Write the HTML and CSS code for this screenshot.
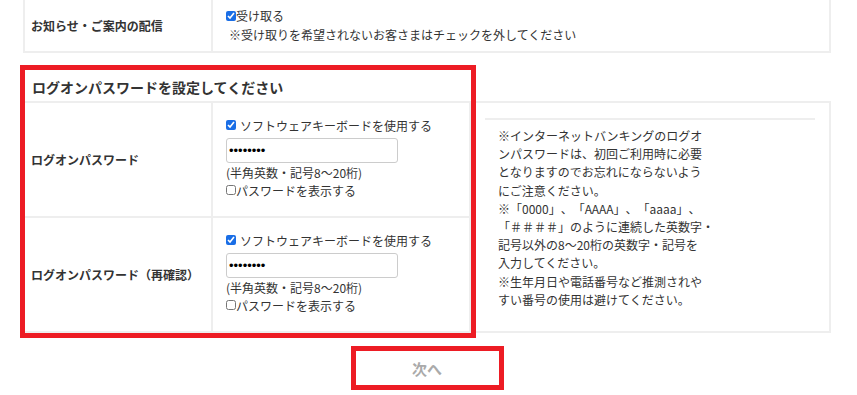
FILE: index.html
```html
<!DOCTYPE html>
<html lang="ja">
<head>
<meta charset="utf-8">
<title>ログオンパスワード設定</title>
<link rel="stylesheet" href="styles.css">
</head>
<body>
<div class="page">
  <table class="form-table top-table">
    <colgroup><col class="c1"><col class="c2w"></colgroup>
    <tr>
      <th>お知らせ・ご案内の配信</th>
      <td class="top-cell">
        <label class="line"><input type="checkbox" class="cb" checked>受け取る</label>
        <div class="line indent">※受け取りを希望されないお客さまはチェックを外してください</div>
      </td>
    </tr>
  </table>

  <section class="pw-section">
    <h2 class="section-title">ログオンパスワードを設定してください</h2>
    <table class="form-table pw-table">
      <colgroup><col class="c1"><col class="c2"><col class="c3"></colgroup>
      <tr>
        <th>ログオンパスワード</th>
        <td class="field">
          <label class="line"><input type="checkbox" class="cb gap" checked>ソフトウェアキーボードを使用する</label>
          <input type="password" class="pw" value="12345678">
          <div class="line">(半角英数・記号8～20桁)</div>
          <label class="line"><input type="checkbox" class="cb">パスワードを表示する</label>
        </td>
        <td class="note" rowspan="2">
          <div class="note-rule"></div>
          <p class="note-text">※インターネットバンキングのログオ<br>ンパスワードは、初回ご利用時に必要<br>となりますのでお忘れにならないよう<br>にご注意ください。<br>※「0000」、「AAAA」、「aaaa」、<br>「＃＃＃＃」のように連続した英数字・<br>記号以外の8～20桁の英数字・記号を<br>入力してください。<br>※生年月日や電話番号など推測されや<br>すい番号の使用は避けてください。</p>
        </td>
      </tr>
      <tr>
        <th>ログオンパスワード（再確認）</th>
        <td class="field">
          <label class="line"><input type="checkbox" class="cb gap" checked>ソフトウェアキーボードを使用する</label>
          <input type="password" class="pw" value="12345678">
          <div class="line">(半角英数・記号8～20桁)</div>
          <label class="line"><input type="checkbox" class="cb">パスワードを表示する</label>
        </td>
      </tr>
    </table>
    <div class="highlight"></div>
  </section>

  <div class="actions">
    <div class="btn-mark"><button class="next-btn" disabled>次へ</button></div>
  </div>
</div>
</body>
</html>
```

FILE: styles.css
```css
* { box-sizing: border-box; }

body {
  margin: 0;
  background: #fff;
  color: #333;
  font-family: "Noto Sans CJK JP", "Noto Sans", sans-serif;
  font-size: 12px;
  text-spacing-trim: space-all;
}

.page {
  width: 808px;
  margin-left: 23px;
}

.form-table {
  width: 100%;
  table-layout: fixed;
  border-collapse: separate;
  border-spacing: 0;
  border-left: 2px solid #eee;
}

.form-table th,
.form-table td {
  border-right: 2px solid #eee;
  border-bottom: 2px solid #eee;
}

.c1 { width: 188px; }
.c2 { width: 258px; }
.c3 { width: 360px; }

.form-table th {
  text-align: left;
  vertical-align: middle;
  font-weight: bold;
  padding: 0 6px;
  color: #333;
}

.top-cell {
  padding: 6px 13px 7px;
  line-height: 19px;
}

.line {
  display: flex;
  align-items: center;
  height: 18px;
  white-space: nowrap;
}

.top-cell .line { height: 19px; }

.indent { padding-left: 3px; }

.cb {
  width: 10px;
  height: 10px;
  margin: 0;
  flex: none;
  accent-color: #1a6ee6;
}

.cb.gap { margin-right: 4px; }

.pw-section {
  position: relative;
  padding-top: 24px;
}

.section-title {
  margin: 0 0 4px;
  padding-left: 9px;
  font-size: 14px;
  line-height: 20px;
  font-weight: bold;
}

.pw-table { border-top: 2px solid #eee; }

.field {
  padding: 13px 13px 17px;
  vertical-align: middle;
}

.pw {
  display: block;
  width: 172px;
  height: 25px;
  margin: 4px 0 0;
  padding: 0 2px;
  border: 1px solid #ccc;
  border-radius: 3px;
  font-family: "Liberation Sans", sans-serif;
  font-size: 13px;
  color: #000;
  background: #fff;
}

.note {
  vertical-align: top;
  padding: 15px 14px 0;
}

.note-rule {
  border-top: 2px solid #eee;
}

.note-text {
  margin: 7px 0 0;
  padding-left: 13px;
  width: 260px;
  line-height: 18.2px;
  white-space: nowrap;
}

.highlight {
  position: absolute;
  left: -3px;
  top: 12px;
  width: 456px;
  height: 273px;
  border: 5px solid #ed1c24;
  pointer-events: none;
}

.actions {
  text-align: center;
  padding-top: 13px;
}

.btn-mark {
  display: inline-block;
  border: 5px solid #ed1c24;
}

.next-btn {
  display: block;
  width: 143px;
  height: 34px;
  border: none;
  background: #fff;
  color: #aaa;
  font-family: "Noto Sans CJK JP", sans-serif;
  font-size: 15px;
  font-weight: bold;
}
```
